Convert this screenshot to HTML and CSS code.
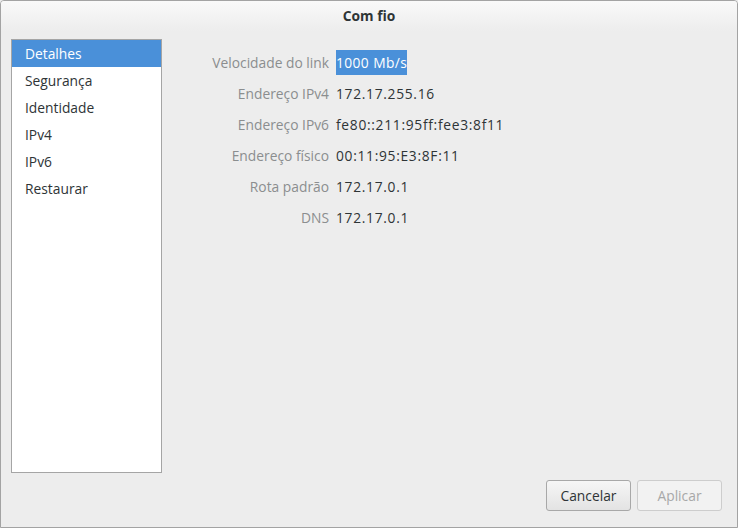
FILE: index.html
```html
<!DOCTYPE html>
<html lang="pt">
<head>
<meta charset="utf-8">
<title>Com fio</title>
<link rel="stylesheet" href="styles.css">
</head>
<body>
<div class="window">
  <div class="titlebar">Com fio</div>
  <div class="main">
    <ul class="sidebar">
      <li class="item selected">Detalhes</li>
      <li class="item">Segurança</li>
      <li class="item">Identidade</li>
      <li class="item">IPv4</li>
      <li class="item">IPv6</li>
      <li class="item">Restaurar</li>
    </ul>
    <div class="details">
      <div class="label">Velocidade do link</div><div class="value"><span class="sel">1000 Mb/s</span></div>
      <div class="label">Endereço IPv4</div><div class="value">172.17.255.16</div>
      <div class="label">Endereço IPv6</div><div class="value">fe80::211:95ff:fee3:8f11</div>
      <div class="label">Endereço físico</div><div class="value">00:11:95:E3:8F:11</div>
      <div class="label">Rota padrão</div><div class="value">172.17.0.1</div>
      <div class="label">DNS</div><div class="value">172.17.0.1</div>
    </div>
  </div>
  <div class="footer">
    <button class="btn">Cancelar</button>
    <button class="btn disabled">Aplicar</button>
  </div>
</div>
</body>
</html>
```

FILE: styles.css
```css
html, body {
  margin: 0;
  padding: 0;
  background: #ededed;
}
body {
  font-family: "Open Sans", "Noto Sans", sans-serif;
  font-size: 13.8px;
  color: #2e3436;
}
.window {
  box-sizing: border-box;
  width: 738px;
  height: 528px;
  border: 1px solid #a3a3a3;
  border-radius: 4px 4px 0 0;
  background: #ededed;
  display: flex;
  flex-direction: column;
  overflow: hidden;
}
.titlebar {
  height: 30px;
  line-height: 30px;
  text-align: center;
  font-weight: bold;
  color: #2e3436;
  background: linear-gradient(#f9f9f9, #ededed);
  flex: none;
}
.main {
  display: flex;
  padding: 8px 0 0 10px;
  height: 434px;
  flex: none;
}
.sidebar {
  list-style: none;
  margin: 0;
  padding: 0;
  box-sizing: border-box;
  width: 151px;
  height: 434px;
  border: 1px solid #a5a5a5;
  background: #ffffff;
  flex: none;
}
.item {
  height: 27px;
  line-height: 28px;
  padding-left: 13px;
  color: #2e3436;
}
.item.selected {
  background: #4a90d9;
  color: #ffffff;
}
.details {
  display: grid;
  grid-template-columns: 167px auto;
  column-gap: 7px;
  grid-auto-rows: 31px;
  align-content: start;
  padding-top: 8px;
}
.label {
  text-align: right;
  color: #8b8e8f;
  line-height: 31px;
  white-space: nowrap;
}
.value {
  line-height: 31px;
  white-space: nowrap;
  color: #2e3436;
  letter-spacing: 0.7px;
}
.sel {
  background: #4a90d9;
  color: #ffffff;
  padding: 3px 0 3px 0;
  letter-spacing: 0.4px;
}
.footer {
  display: flex;
  justify-content: flex-end;
  gap: 6px;
  padding: 7px 15px 0 0;
}
.btn {
  box-sizing: border-box;
  width: 85px;
  height: 31px;
  border: 1px solid #a8a8a8;
  border-radius: 3px;
  background: linear-gradient(#f6f6f6, #e3e3e3);
  font-family: inherit;
  font-size: 13.8px;
  color: #2e3436;
  padding: 0;
}
.btn.disabled {
  border-color: #cdcdcd;
  background: #f2f2f2;
  color: #a8a8a8;
}
```
